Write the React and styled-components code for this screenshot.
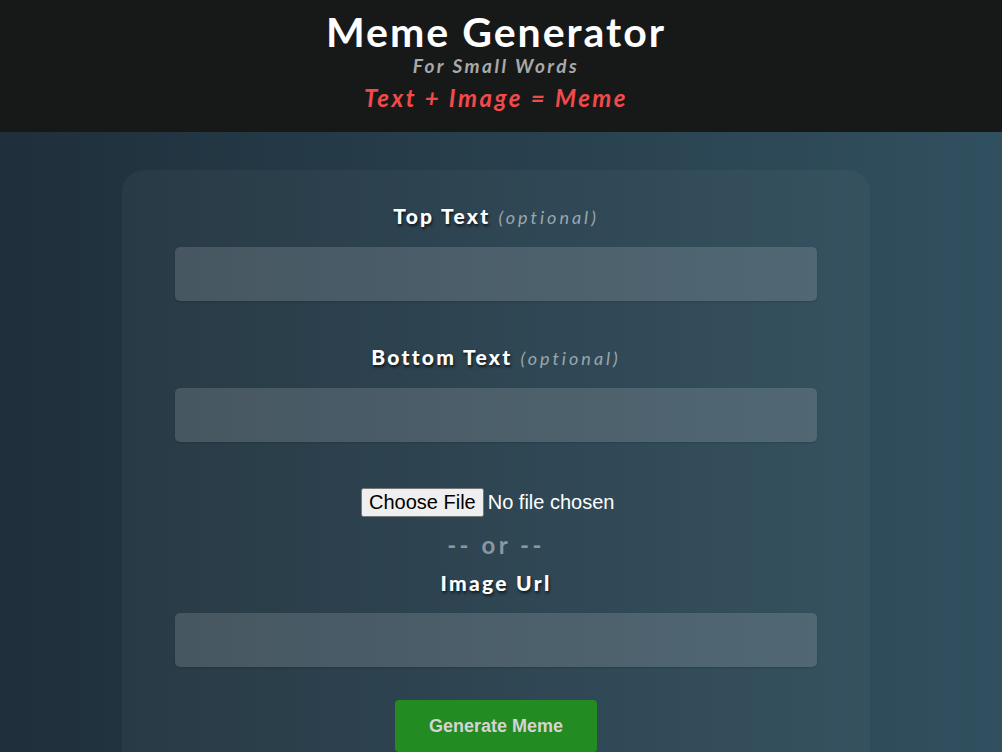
import React from 'react'
import styled, { createGlobalStyle } from 'styled-components'

const GlobalStyle = createGlobalStyle`
  html, body {
    margin: 0;
    padding: 0;
    height: 100%;
  }
  body {
    font-family: Lato, "Open Sans", sans-serif;
    background: linear-gradient(to right, #1f2f3b, #31505f);
    overflow: hidden;
  }
`

const Header = styled.header`
  background: #171919;
  height: 132px;
  display: flex;
  flex-direction: column;
  align-items: center;
  padding: 7px 10px 0 0;
  box-sizing: border-box;
`

const Title = styled.h1`
  margin: 0;
  color: #fff;
  font-size: 41px;
  font-weight: 700;
  letter-spacing: 2px;
  line-height: 50px;
`

const Subtitle = styled.div`
  color: #a9a9a9;
  font-style: italic;
  font-weight: 700;
  font-size: 19px;
  letter-spacing: 2.5px;
  line-height: 18px;
`

const Tagline = styled.div`
  color: #f24a4a;
  font-style: italic;
  font-weight: 700;
  font-size: 24px;
  letter-spacing: 2.5px;
  margin-top: 8px;
`

const Main = styled.main`
  display: flex;
  justify-content: center;
  padding: 38px 10px 0 0;
`

const Card = styled.form`
  width: 748px;
  min-height: 700px;
  background: rgba(255, 255, 255, 0.035);
  border-radius: 22px;
  display: flex;
  flex-direction: column;
  align-items: center;
  padding-top: 33px;
  box-sizing: border-box;
`

const Field = styled.div`
  display: flex;
  flex-direction: column;
  align-items: center;
  width: 642px;
  margin-bottom: ${(p) => p.$after || 0}px;
`

const Label = styled.label`
  color: #fff;
  font-weight: 900;
  font-size: 21px;
  letter-spacing: 2.3px;
  text-shadow: 1px 2px 3px rgba(0, 0, 0, 0.7);
  line-height: 26px;
  margin-bottom: 17px;
`

const Optional = styled.span`
  color: #9aa6ad;
  font-style: italic;
  font-weight: 400;
  font-size: 18px;
  letter-spacing: 3px;
  text-shadow: none;
  margin-left: 8px;
`

const TextInput = styled.input`
  width: 100%;
  height: 54px;
  border: none;
  border-radius: 5px;
  background: rgba(255, 255, 255, 0.14);
  box-shadow: 0 1px 2px rgba(0, 0, 0, 0.15);
  box-sizing: border-box;
  color: #fff;
  font-size: 18px;
  padding: 0 12px;
  outline: none;
`

const FileInput = styled.input`
  color: #fff;
  font-family: Arial, "Liberation Sans", sans-serif;
  font-size: 20px;
  width: 270px;
  margin-top: 8px;
`

const Or = styled.div`
  color: #8a979f;
  font-weight: 700;
  font-size: 24px;
  letter-spacing: 3.5px;
  margin: 13px 0 11px;
`

const Button = styled.button`
  background: #228b22;
  color: #d4d4d4;
  border: none;
  border-radius: 4px;
  width: 202px;
  height: 52px;
  font-family: Arial, "Liberation Sans", sans-serif;
  font-weight: 700;
  font-size: 18px;
  margin-top: 33px;
`

export default function App() {
  return (
    <>
      <GlobalStyle />
      <Header>
        <Title>Meme Generator</Title>
        <Subtitle>For Small Words</Subtitle>
        <Tagline>Text + Image = Meme</Tagline>
      </Header>
      <Main>
        <Card onSubmit={(e) => e.preventDefault()}>
          <Field $after={43}>
            <Label>
              Top Text<Optional>(optional)</Optional>
            </Label>
            <TextInput type="text" />
          </Field>
          <Field $after={38}>
            <Label>
              Bottom Text<Optional>(optional)</Optional>
            </Label>
            <TextInput type="text" />
          </Field>
          <FileInput type="file" />
          <Or>-- or --</Or>
          <Field>
            <Label>Image Url</Label>
            <TextInput type="text" />
          </Field>
          <Button type="submit">Generate Meme</Button>
        </Card>
      </Main>
    </>
  )
}
